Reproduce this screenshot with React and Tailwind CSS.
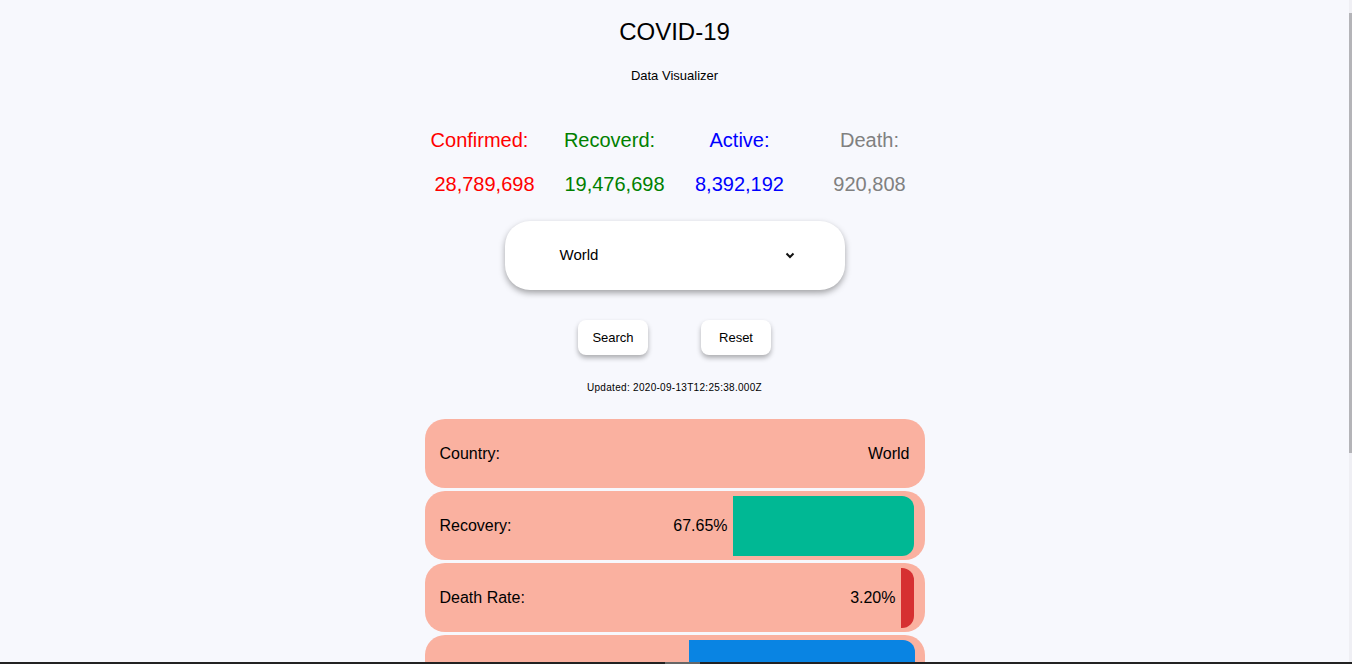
import React from "react";

const stats = [
  { label: "Confirmed:", value: "28,789,698", color: "text-[#ff0000]", shift: "pl-[10px]" },
  { label: "Recoverd:", value: "19,476,698", color: "text-[#008000]", shift: "pl-[10px]" },
  { label: "Active:", value: "8,392,192", color: "text-[#0000ff]", shift: "" },
  { label: "Death:", value: "920,808", color: "text-[#808080]", shift: "" },
];

const rows = [
  { label: "Country:", value: "World" },
  { label: "Recovery:", value: "67.65%", bar: "bg-[#00b894]", width: 181 },
  { label: "Death Rate:", value: "3.20%", bar: "bg-[#d63031]", width: 13 },
  { label: "Active:", value: "29.15%", bar: "bg-[#0984e3]", width: 226, pr: "pr-[10px]" },
];

const Chevron = () => (
  <svg width="10" height="7" viewBox="0 0 10 7" className="shrink-0">
    <path d="M1.5 1.5 L5 5 L8.5 1.5" fill="none" stroke="#111" strokeWidth="2" />
  </svg>
);

const StatRow = ({ label, value, bar, width, pr }) => (
  <div className="shrink-0 flex items-center h-[69px] rounded-[20px] bg-[#fab1a0] pl-[15px] text-[16px] text-black">
    <span className="flex-1">{label}</span>
    {bar ? (
      <div className={`flex items-center h-full pt-[5px] pb-[4px] ${pr || "pr-[11px]"}`}>
        <span className="mr-[5px]">{value}</span>
        <div
          className={`h-full rounded-r-[12px] ${bar}`}
          style={{ width }}
        />
      </div>
    ) : (
      <span className="pr-[15px]">{value}</span>
    )}
  </div>
);

export default function App() {
  return (
    <div className="flex flex-col h-[664px] overflow-hidden bg-[#f7f8fd] font-['Liberation_Sans',Arial,sans-serif]">
      <div className="flex flex-1 min-h-0">
        <main className="flex-1 flex flex-col items-center pt-[18px] overflow-hidden">
          <h1 className="shrink-0 text-[24px] leading-[28px] text-black">COVID-19</h1>
          <p className="shrink-0 mt-[22px] text-[13px] leading-[16px] text-black">Data Visualizer</p>

          <div className="shrink-0 mt-[44px] grid grid-cols-4 w-[520px] text-[20px] leading-[24px]">
            {stats.map((s) => (
              <div key={s.label} className={`flex flex-col items-center ${s.color}`}>
                <span>{s.label}</span>
                <span className={`mt-[20px] ${s.shift}`}>{s.value}</span>
              </div>
            ))}
          </div>

          <div className="shrink-0 mt-[25px] flex items-center w-[340px] h-[69px] rounded-[25px] bg-white shadow-[0_3px_6px_rgba(0,0,0,0.35)] pl-[55px] pr-[50px] text-[15px] text-black">
            <span className="flex-1">World</span>
            <Chevron />
          </div>

          <div className="shrink-0 mt-[30px] flex gap-[53px]">
            {["Search", "Reset"].map((b) => (
              <button
                key={b}
                className="w-[70px] h-[35px] rounded-[8px] bg-white text-[13px] text-black shadow-[0_3px_5px_rgba(0,0,0,0.3)]"
              >
                {b}
              </button>
            ))}
          </div>

          <p className="shrink-0 mt-[27px] text-[10px] leading-[12px] tracking-[0.3px] text-black">
            Updated: 2020-09-13T12:25:38.000Z
          </p>

          <div className="shrink-0 mt-[25px] flex flex-col gap-[3px] w-[500px]">
            {rows.map((r) => (
              <StatRow key={r.label} {...r} />
            ))}
          </div>
        </main>
        <div className="w-[3px] bg-[#efeff4] pt-[13px]">
          <div className="h-[440px] bg-[#b4b4b8]" />
        </div>
      </div>
      <div className="flex h-[2px] bg-[#222]">
        <div className="w-[665px]" />
        <div className="w-[35px] bg-[#666]" />
      </div>
    </div>
  );
}
